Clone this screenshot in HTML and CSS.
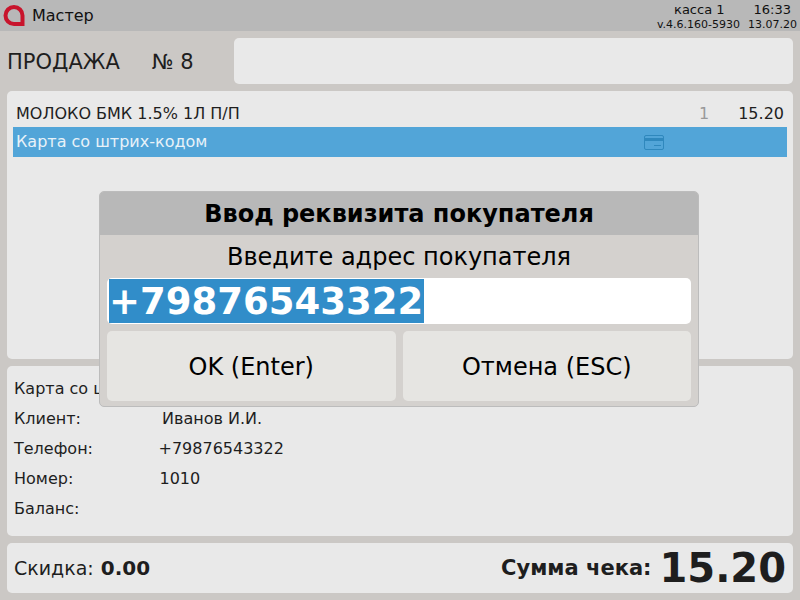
FILE: index.html
```html
<!DOCTYPE html>
<html lang="ru">
<head>
<meta charset="utf-8">
<title>Мастер</title>
<link rel="stylesheet" href="styles.css">
</head>
<body>
<div class="app">
  <header class="topbar">
    <svg class="logo" viewBox="0 0 22 22" width="22" height="22"><path d="M11 2a8.5 8.5 0 0 0 0 17h8.5V10.500A8.500 8.500 0 0 0 11 2z" fill="none" stroke="#c8142c" stroke-width="4"/></svg>
    <span class="app-name">Мастер</span>
    <div class="status">
      <div class="status-row status-top"><span class="kassa">касса 1</span><span class="clock">16:33</span></div>
      <div class="status-row status-bottom"><span>v.4.6.160-5930</span><span>13.07.20</span></div>
    </div>
  </header>
  <main class="content">
    <section class="head-row">
      <div class="sale-title"><span class="sale-word">ПРОДАЖА</span><span class="sale-num">№ 8</span></div>
      <div class="card sale-input"></div>
    </section>
    <section class="card items">
      <div class="item">
        <span class="item-name">МОЛОКО БМК 1.5% 1Л П/П</span>
        <span class="item-qty">1</span>
        <span class="item-price">15.20</span>
      </div>
      <div class="item-sel">
        <span class="sel-name">Карта со штрих-кодом</span>
        <svg class="card-icon" viewBox="0 0 20 15" width="20" height="15"><rect x="0.5" y="0.5" width="19" height="14" rx="1.5" fill="none" stroke="#2f88bd"/><rect x="1" y="3" width="18" height="3" fill="#2f88bd"/><rect x="10" y="10" width="7" height="1" fill="#2f88bd"/></svg>
      </div>
    </section>
    <section class="card info">
      <div class="info-row"><span>Карта со штрих-кодом</span></div>
      <div class="info-row"><span class="info-label">Клиент:</span><span class="val-name">Иванов И.И.</span></div>
      <div class="info-row"><span class="info-label">Телефон:</span><span class="val-phone">+79876543322</span></div>
      <div class="info-row"><span class="info-label">Номер:</span><span class="val-num">1010</span></div>
      <div class="info-row"><span class="info-label">Баланс:</span></div>
    </section>
    <section class="card totals">
      <div class="discount">Скидка: <b class="discount-value">0.00</b></div>
      <div class="sum"><b class="sum-label">Сумма чека:</b><b class="sum-value">15.20</b></div>
    </section>
  </main>
  <div class="modal">
    <div class="modal-title">Ввод реквизита покупателя</div>
    <div class="modal-body">
      <div class="modal-prompt">Введите адрес покупателя</div>
      <div class="modal-input"><span class="selected">+79876543322</span></div>
      <div class="modal-buttons">
        <div class="btn">OK (Enter)</div>
        <div class="btn">Отмена (ESC)</div>
      </div>
    </div>
  </div>
</div>
</body>
</html>
```
FILE: styles.css
```css
* { box-sizing: border-box; }
html, body { margin: 0; padding: 0; }
body { width: 800px; height: 600px; overflow: hidden; background: #cbc8c5; font-family: "DejaVu Sans", sans-serif; color: #1e1e1e; }
.app { position: relative; width: 800px; height: 600px; }
.topbar { height: 31px; background: #b8b8b8; display: flex; align-items: center; padding: 0 3px; color: #111; }
.logo { flex: none; }
.app-name { font-size: 16px; margin-left: 7px; }
.status { margin-left: auto; display: flex; flex-direction: column; align-items: flex-end; padding-top: 3px; }
.status-row { display: flex; white-space: nowrap; }
.status-top { font-size: 13px; line-height: 16px; padding-right: 6px; }
.clock { margin-left: 29px; }
.status-bottom { font-size: 11px; line-height: 14px; gap: 8px; }
.content { padding: 7px; display: flex; flex-direction: column; gap: 7px; }
.card { background: #e9e9e9; border-radius: 5px; }
.head-row { height: 46px; display: flex; }
.sale-title { width: 227px; display: flex; align-items: center; font-size: 21px; padding-top: 2px; }
.sale-num { margin-left: 32px; }
.sale-input { flex: 1; }
.items { height: 268px; padding: 6px; }
.item { height: 30px; display: flex; align-items: center; font-size: 16px; padding: 2px 3px 0; }
.item-name { flex: 1; }
.item-qty { color: #999; margin-right: 29px; }
.item-sel { height: 30px; background: #52a5d8; color: #e8f2f8; display: flex; align-items: center; font-size: 16px; padding: 0 0 2px 3px; }
.sel-name { flex: 1; }
.card-icon { margin: 2px 123px 0 0; }
.info { height: 170px; padding: 7px 7px; font-size: 16px; }
.info-row { height: 30px; display: flex; align-items: center; }
.info-label { width: 144.5px; }
.val-name { margin-left: 3.5px; }
.val-num { margin-left: 1px; }
.totals { height: 50px; display: flex; align-items: center; justify-content: space-between; padding: 0 7px; font-size: 19px; }
.discount-value { font-size: 20px; margin-left: 1px; }
.sum { display: flex; align-items: center; }
.sum-label { font-size: 21px; }
.sum-value { font-size: 40px; margin-left: 8px; }
.modal { position: absolute; left: 99px; top: 191px; width: 600px; height: 216px; background: #d4d1ce; border-radius: 5px; border: 1px solid #bcbcbc; overflow: hidden; color: #000; }
.modal-title { height: 43px; background: #b8b8b8; font-size: 24px; font-weight: 700; display: flex; align-items: center; justify-content: center; }
.modal-body { padding: 0 7px; }
.modal-prompt { height: 43px; display: flex; align-items: center; justify-content: center; font-size: 24px; }
.modal-input { height: 46px; background: #fff; border-radius: 5px; display: flex; align-items: center; padding: 1px 2px; }
.selected { background: #318dc9; color: #fff; font-size: 37px; font-weight: 700; line-height: 43px; padding: 1px 1px 0 0; }
.modal-buttons { margin-top: 7px; display: flex; gap: 7px; }
.btn { flex: 1; height: 70px; background: #e6e5e2; border-radius: 5px; display: flex; align-items: center; justify-content: center; font-size: 24px; padding-top: 2px; }
```
